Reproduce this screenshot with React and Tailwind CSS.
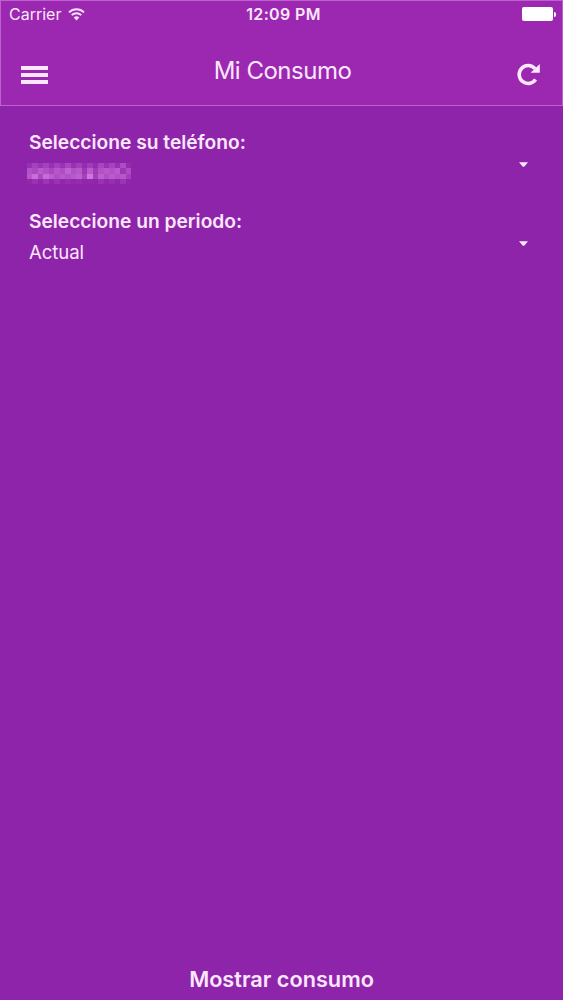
// opacity of every block of the masked phone number, row by row
const MASK_ROWS = [
  [12, 28, 16, 28, 12, 28, 14, 32, 12, 26, 8, 24, 8, 32, 14, 30, 12, 38, 8],
  [44, 36, 52, 44, 34, 48, 38, 60, 42, 50, 18, 52, 22, 44, 50, 44, 52, 18, 38],
  [50, 70, 36, 68, 54, 42, 50, 44, 50, 56, 28, 78, 26, 56, 42, 52, 44, 48, 26],
  [4, 14, 4, 16, 4, 14, 4, 10, 4, 8, 2, 4, 2, 14, 4, 10, 4, 16, 2],
];

function WifiIcon() {
  return (
    <svg className="w-[17px] h-[13px]" viewBox="0 0 17 13" fill="none" stroke="#fbe3fd">
      <path d="M1 4.4a10.6 10.6 0 0 1 15 0" strokeWidth="2" />
      <path d="M3.7 7.2a6.8 6.8 0 0 1 9.6 0" strokeWidth="1.9" />
      <path d="M5.7 9.5a4 4 0 0 1 5.6 0L8.5 12.4z" fill="#fbe3fd" stroke="none" />
    </svg>
  );
}

function ReloadIcon() {
  return (
    <svg className="w-[23px] h-[23px]" viewBox="0 0 23 23" fill="none">
      <path d="M18.6 16.6A9 9 0 1 1 18 5.6" stroke="#fdeafe" strokeWidth="3.6" />
      <path d="M22.8 1V9.8H13.6z" fill="#fdeafe" />
    </svg>
  );
}

function MaskedNumber() {
  return (
    <svg className="block w-[104px] h-[21px] mt-[3px] -ml-[2px]" viewBox="0 0 19 4" preserveAspectRatio="none" shapeRendering="crispEdges">
      {MASK_ROWS.map((row, y) =>
        row.map((value, x) => (
          <rect key={`${x}-${y}`} x={x} y={y} width="1" height="1" fill="#e08eec" fillOpacity={value / 100} />
        ))
      )}
    </svg>
  );
}

function Field({ label, children }) {
  return (
    <button className="flex w-full h-[79px] text-left">
      <span className="flex-1">
        <span className="block h-[30px] text-[19.2px] leading-[24px] font-semibold whitespace-nowrap">{label}</span>
        {children}
      </span>
      <svg className="w-[9px] h-[5px] mt-[32px] mr-[35px]" viewBox="0 0 9 5">
        <path d="M0 .2h9L5.2 4.8H3.8z" fill="#fdeafe" />
      </svg>
    </button>
  );
}

function App() {
  return (
    <div className="flex flex-col h-screen bg-[#8e24aa] text-[#fde7fe] font-[Inter,sans-serif]">
      <header className="h-[106px] bg-[#9c27b0] border border-[#bd62cc]">
        <div className="grid grid-cols-3 items-center h-[26px] pl-[8px] pr-[7px]">
          <div className="flex items-center gap-[7px]">
            <span className="text-[16px] leading-[20px]">Carrier</span>
            <WifiIcon />
          </div>
          <span className="pl-[3px] text-[16px] leading-[20px] font-semibold text-center tracking-[0.35px]">12:09 PM</span>
          <div className="flex items-center justify-end gap-px">
            <span className="w-[31px] h-[14px] rounded-[2px] bg-white" />
            <span className="w-[2px] h-[5px] -mr-px rounded-r-full bg-white" />
          </div>
        </div>
        <div className="flex items-center justify-between h-[78px] pl-[20px] pr-[22px] pt-[8px]">
          <button className="flex flex-col gap-[3px] mt-[9px]" aria-label="Menú">
            <span className="w-[27px] h-[4px] bg-[#fde7fe]" />
            <span className="w-[27px] h-[4px] bg-[#fde7fe]" />
            <span className="w-[27px] h-[4px] bg-[#fde7fe]" />
          </button>
          <h1 className="mt-[2px] text-[24px] leading-[30px] tracking-[-0.5px]">Mi Consumo</h1>
          <button className="mt-[8px]" aria-label="Actualizar">
            <ReloadIcon />
          </button>
        </div>
      </header>
      <main className="flex-1 pt-[24px] pl-[29px]">
        <Field label="Seleccione su teléfono:">
          <MaskedNumber />
        </Field>
        <Field label="Seleccione un periodo:">
          <span className="block text-[18.6px] leading-[26px] tracking-[-0.1px]">Actual</span>
        </Field>
      </main>
      <button className="h-[42px] text-[21.7px] leading-[42px] font-semibold">Mostrar consumo</button>
    </div>
  );
}

export default App;
